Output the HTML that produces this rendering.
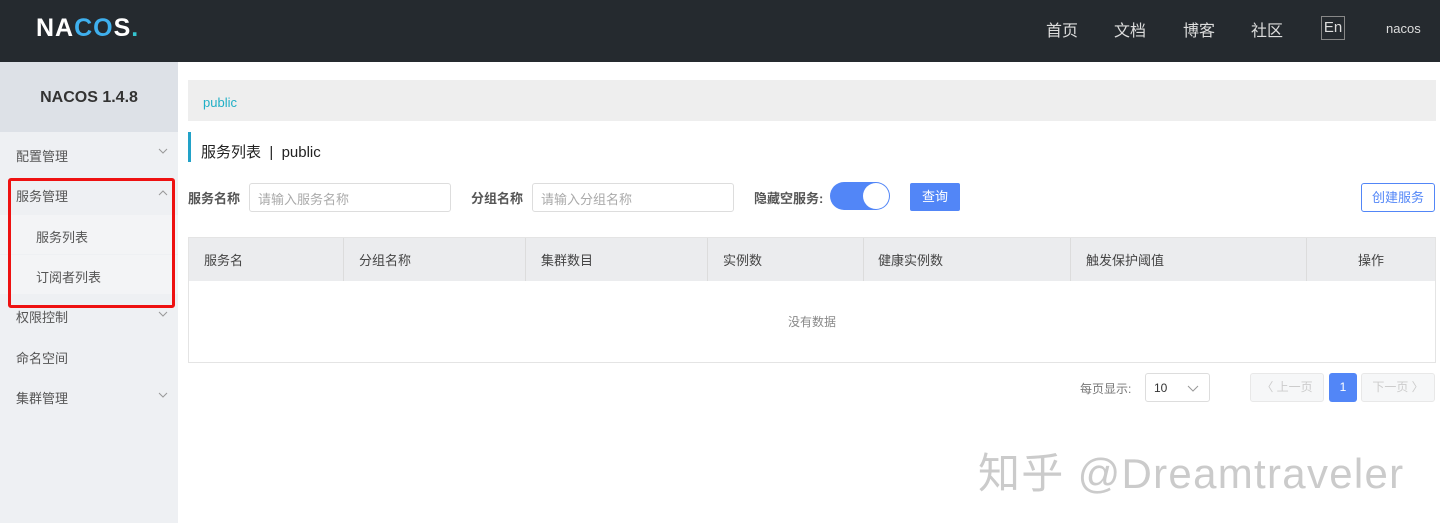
<!DOCTYPE html>
<html><head><meta charset="utf-8"><style>
*{margin:0;padding:0;box-sizing:border-box}
body{width:1440px;height:523px;overflow:hidden;background:#fff;font-family:"Liberation Sans","Noto Sans CJK SC",sans-serif;position:relative;color:#333}
.hd{position:absolute;left:0;top:0;width:1440px;height:62px;background:#252a2f}
.logo{position:absolute;left:36px;top:14px;font-size:25px;font-weight:bold;color:#fff;letter-spacing:1px}
.logo .c{color:#3fb0ee}.logo .d{color:#35c5d0}
.nav{position:absolute;top:17px;font-size:16px;color:#ddd}
.en{position:absolute;left:1321px;top:16px;width:24px;height:24px;border:1px solid #888;color:#ddd;font-size:15px;text-align:center;line-height:22px}
.sb{position:absolute;left:0;top:62px;width:178px;height:461px;background:#eef0f3}
.sbt{height:70px;background:#dde1e7;text-align:center;line-height:72px;font-weight:bold;font-size:16px;color:#333}
.mi{position:absolute;left:16px;font-size:13px;color:#555}
.ar{position:absolute;left:158px;width:10px;height:10px}
.ar svg{display:block}
.sub{position:absolute;left:0;width:178px;height:39px;background:#f3f4f6}
.red{position:absolute;left:8px;top:178px;width:167px;height:130px;border:3px solid #ee1111;border-radius:3px}
.bc{position:absolute;left:188px;top:80px;width:1248px;height:41px;background:#eeeeee;color:#20afc6;font-size:13px;padding:15px 0 0 15px}
.tt{position:absolute;left:188px;top:132px;height:30px;border-left:3px solid #22a2c8;padding:9px 0 0 10px;font-size:15px;color:#222}
.lb{position:absolute;top:188px;font-size:13px;font-weight:bold;color:#555}
.ip{position:absolute;top:183px;width:202px;height:29px;border:1px solid #ddd;border-radius:3px;font-size:13px;color:#aaa;padding:5px 8px}
.tg{position:absolute;left:830px;top:182px;width:60px;height:28px;border-radius:14px;background:#5286f7}
.tg i{position:absolute;right:1px;top:1px;width:26px;height:26px;border-radius:50%;background:#fff}
.btn{position:absolute;left:910px;top:183px;width:50px;height:28px;background:#5286f7;color:#fff;font-size:13px;text-align:center;line-height:28px;border-radius:2px}
.cb{position:absolute;left:1361px;top:183px;width:74px;height:29px;border:1px solid #5286f7;color:#5286f7;font-size:13px;text-align:center;line-height:27px;border-radius:3px}
.tb{position:absolute;left:188px;top:237px;width:1248px;height:126px;border:1px solid #e4e4e4}
.th{height:43px;background:#ebecee;position:relative}
.th span{position:absolute;top:12px;font-size:13px;color:#444}
.th b{position:absolute;top:0;width:1px;height:43px;background:#dcdcdc}
.nd{position:absolute;left:0;width:100%;top:75px;text-align:center;font-size:12px;color:#888}
.pg{position:absolute;font-size:12px}
.wm{position:absolute;left:978px;top:440px;font-size:42px;color:#cbcbcb;letter-spacing:1.3px}
</style></head><body>
<div class="hd">
<div class="logo">NA<span class="c">CO</span>S<span class="d">.</span></div>
<div class="nav" style="left:1046px">首页</div>
<div class="nav" style="left:1114px">文档</div>
<div class="nav" style="left:1183px">博客</div>
<div class="nav" style="left:1251px">社区</div>
<div class="en">En</div>
<div class="nav" style="left:1386px;top:21px;font-size:13px">nacos</div>
</div>
<div class="sb">
<div class="sbt">NACOS 1.4.8</div>
</div>
<div class="sub" style="top:215px"></div>
<div class="sub" style="top:255px"></div>
<div class="mi" style="top:146px">配置管理</div><div class="ar" style="top:148px"><svg width="10" height="6"><path d="M1 1L5 5L9 1" fill="none" stroke="#999" stroke-width="1"/></svg></div>
<div class="mi" style="top:186px">服务管理</div><div class="ar" style="top:190px"><svg width="10" height="6"><path d="M1 5L5 1L9 5" fill="none" stroke="#999" stroke-width="1"/></svg></div>
<div class="mi" style="top:227px;left:36px">服务列表</div>
<div class="mi" style="top:267px;left:36px">订阅者列表</div>
<div class="mi" style="top:307px">权限控制</div><div class="ar" style="top:311px"><svg width="10" height="6"><path d="M1 1L5 5L9 1" fill="none" stroke="#999" stroke-width="1"/></svg></div>
<div class="mi" style="top:348px">命名空间</div>
<div class="mi" style="top:388px">集群管理</div><div class="ar" style="top:392px"><svg width="10" height="6"><path d="M1 1L5 5L9 1" fill="none" stroke="#999" stroke-width="1"/></svg></div>
<div class="red"></div>
<div class="bc">public</div>
<div class="tt">服务列表 &nbsp;|&nbsp; public</div>
<div class="lb" style="left:188px">服务名称</div>
<div class="ip" style="left:249px">请输入服务名称</div>
<div class="lb" style="left:471px">分组名称</div>
<div class="ip" style="left:532px">请输入分组名称</div>
<div class="lb" style="left:754px">隐藏空服务:</div>
<div class="tg"><i></i></div>
<div class="btn">查询</div>
<div class="cb">创建服务</div>
<div class="tb"><div class="th">
<span style="left:15px">服务名</span><b style="left:154px"></b>
<span style="left:170px">分组名称</span><b style="left:336px"></b>
<span style="left:352px">集群数目</span><b style="left:518px"></b>
<span style="left:534px">实例数</span><b style="left:674px"></b>
<span style="left:689px">健康实例数</span><b style="left:881px"></b>
<span style="left:897px">触发保护阈值</span><b style="left:1117px"></b>
<span style="left:1169px">操作</span>
</div><div class="nd">没有数据</div></div>
<div class="pg" style="left:1080px;top:380px;color:#777">每页显示:</div>
<div class="pg" style="left:1145px;top:373px;width:65px;height:29px;border:1px solid #ddd;border-radius:3px;padding:7px 8px;color:#333">10<svg style="position:absolute;right:10px;top:11px" width="12" height="7"><path d="M1 1L6 6L11 1" fill="none" stroke="#999" stroke-width="1"/></svg></div>
<div class="pg" style="left:1250px;top:373px;width:74px;height:29px;border:1px solid #e8e8e8;background:#f6f7f8;border-radius:3px;color:#ccc;text-align:center;line-height:27px">〈 上一页</div>
<div class="pg" style="left:1329px;top:373px;width:28px;height:29px;background:#5286f7;color:#fff;border-radius:3px;text-align:center;line-height:29px">1</div>
<div class="pg" style="left:1361px;top:373px;width:74px;height:29px;border:1px solid #e8e8e8;background:#f6f7f8;border-radius:3px;color:#ccc;text-align:center;line-height:27px">下一页 〉</div>
<div class="wm">知乎 @Dreamtraveler</div>
</body></html>
